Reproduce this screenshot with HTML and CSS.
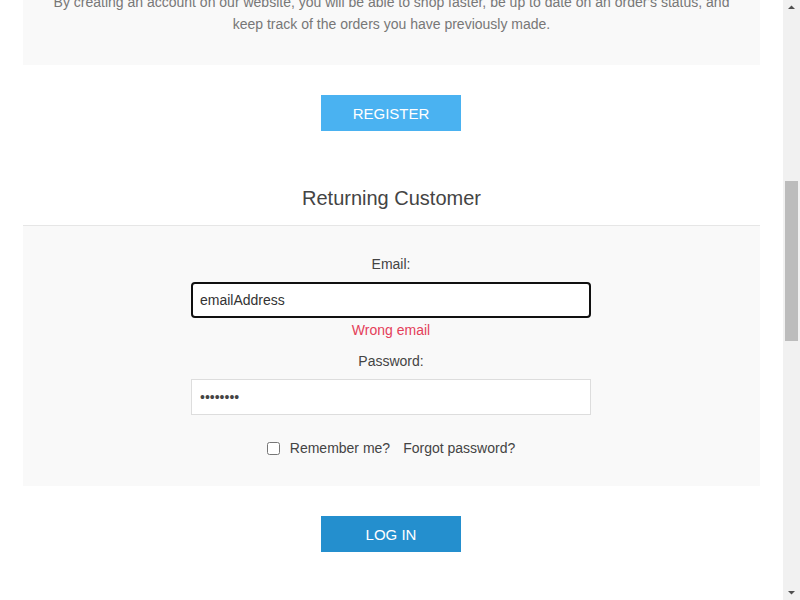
FILE: index.html
```html
<!DOCTYPE html>
<html lang="en">
<head>
<meta charset="utf-8">
<title>Login</title>
<link rel="stylesheet" href="styles.css">
</head>
<body>
<header class="site-header">
  <div class="topbar">
    <span class="topbar-link">Register</span>
    <span class="topbar-link">Log in</span>
    <span class="topbar-link">Wishlist (0)</span>
    <span class="topbar-link">Shopping cart (0)</span>
  </div>
  <div class="brand-row">
    <span class="brand">Your store name</span>
  </div>
  <nav class="menu">
    <span class="menu-item">Computers</span>
    <span class="menu-item">Electronics</span>
    <span class="menu-item">Apparel</span>
    <span class="menu-item">Books</span>
  </nav>
</header>

<main class="page">
  <h1 class="page-title">Welcome, Please Sign In!</h1>

  <section class="block">
    <h2 class="block-title">New Customer</h2>
    <div class="panel panel--text">
      <p class="intro">By creating an account on our website, you will be able to shop faster, be up to date on an order's status, and keep track of the orders you have previously made.</p>
    </div>
    <div class="actions">
      <button type="button" class="btn btn--register">Register</button>
    </div>
  </section>

  <section class="block">
    <h2 class="block-title js-anchor">Returning Customer</h2>
    <form class="panel panel--form">
      <label class="label" for="email">Email:</label>
      <input id="email" class="field field--active" type="text" value="emailAddress">
      <span class="error">Wrong email</span>
      <label class="label label--gap" for="password">Password:</label>
      <input id="password" class="field" type="password" value="12345678">
      <div class="remember">
        <input id="remember" class="check" type="checkbox">
        <label class="remember-label" for="remember">Remember me?</label>
        <a class="forgot" href="#">Forgot password?</a>
      </div>
    </form>
    <div class="actions actions--last">
      <button type="button" class="btn btn--login">Log in</button>
    </div>
  </section>
</main>

<footer class="site-footer">
  <div class="footer-inner">
    <span class="footer-text">Powered by your store</span>
  </div>
</footer>

<div class="scrollbar" aria-hidden="true">
  <svg class="sb-arrow" width="17" height="17" viewBox="0 0 17 17"><polygon points="5,9 8.5,5.5 12,9" fill="#505050"/></svg>
  <div class="sb-track"><div class="sb-thumb"></div></div>
  <svg class="sb-arrow" width="17" height="17" viewBox="0 0 17 17"><polygon points="5,8 8.5,11.5 12,8" fill="#505050"/></svg>
</div>
<script src="script.js"></script>
</body>
</html>
```

FILE: styles.css
```css
* { box-sizing: border-box; }

html, body {
  margin: 0;
  padding: 0;
}

body {
  font-family: "Liberation Sans", Arial, sans-serif;
  font-size: 14px;
  color: #444;
  background: #fff;
  padding-right: 17px;
}

/* header (above the visible area) */
.site-header {
  height: 300px;
  display: flex;
  flex-direction: column;
}
.topbar {
  height: 40px;
  display: flex;
  justify-content: flex-end;
  align-items: center;
  gap: 20px;
  padding: 0 23px;
  background: #eee;
  color: #777;
  font-size: 12px;
}
.brand-row {
  flex: 1;
  display: flex;
  align-items: center;
  padding: 0 23px;
}
.brand {
  font-size: 28px;
  color: #4ab2f1;
}
.menu {
  height: 60px;
  display: flex;
  align-items: center;
  justify-content: center;
  gap: 30px;
  border-top: 1px solid #ddd;
  border-bottom: 1px solid #ddd;
  color: #555;
  text-transform: uppercase;
}

.page {
  width: 737px;
  margin: 0 auto;
}

.page-title {
  margin: 0;
  padding: 70px 0 71px;
  font-size: 30px;
  line-height: 40px;
  font-weight: normal;
  text-align: center;
  color: #444;
}

.block-title {
  margin: 55px 0 0;
  padding: 0 0 15px;
  font-size: 20px;
  line-height: 24px;
  font-weight: normal;
  text-align: center;
  color: #444;
  border-bottom: 1px solid #e6e6e6;
}
.page-title + .block .block-title { margin-top: 0; }

.panel {
  background: #f9f9f9;
}

.panel--text {
  padding: 30px 15px;
}
.intro {
  margin: 0;
  text-align: center;
  line-height: 22px;
  color: #777;
}

.actions {
  display: flex;
  justify-content: center;
  padding: 30px 1px 0 0;
}
.actions--last { padding-bottom: 60px; }

.btn {
  width: 140px;
  height: 36px;
  border: none;
  padding: 0;
  font-family: "Liberation Sans", Arial, sans-serif;
  font-size: 15px;
  text-transform: uppercase;
  color: #fff;
  cursor: pointer;
}
.btn--register { background: #4ab2f1; }
.btn--login { background: #248fce; }

.panel--form {
  padding: 28px 1px 28px 0;
  display: flex;
  flex-direction: column;
  align-items: center;
}

.label {
  line-height: 20px;
  color: #444;
  margin-bottom: 8px;
}
.label--gap { margin-top: 11px; }

.field {
  width: 400px;
  height: 36px;
  border: 1px solid #ddd;
  background: #fff;
  padding: 0 8px;
  font-family: "Liberation Sans", Arial, sans-serif;
  font-size: 14px;
  color: #444;
  border-radius: 0;
}
.field:focus { outline: none; }
.field--active {
  border: 2px solid #101010;
  border-radius: 4px;
  padding: 0 7px;
  color: #333;
}

.error {
  margin-top: 2px;
  line-height: 20px;
  color: #e4405a;
}

.remember {
  margin-top: 23px;
  display: flex;
  align-items: center;
  line-height: 20px;
}
.check {
  width: 13px;
  height: 13px;
  margin: 0 10px 0 0;
}
.remember-label { color: #444; }
.forgot {
  margin-left: 13px;
  color: #444;
  text-decoration: none;
}

.site-footer {
  min-height: 895px;
  background: #f3f3f3;
}
.footer-inner {
  padding: 40px 23px;
  text-align: center;
  color: #888;
  font-size: 12px;
}

/* window scrollbar, drawn over the right edge of the viewport */
.scrollbar {
  position: fixed;
  top: 0;
  right: 0;
  width: 17px;
  height: 100vh;
  background: #f1f1f1;
  display: flex;
  flex-direction: column;
}
.sb-arrow {
  display: block;
  flex: none;
}
.sb-track {
  flex: 1;
  padding: 164px 2px 0;
}
.sb-thumb {
  height: 160px;
  background: #bcbcbc;
}
```

FILE: script.js
```js
(function () {
  function place() {
    var email = document.getElementById('email');
    if (email) {
      try { email.focus({ preventScroll: true }); } catch (e) { email.focus(); }
      var n = email.value.length;
      email.setSelectionRange(n, n);
    }
    var anchor = document.querySelector('.js-anchor');
    if (anchor) {
      var y = anchor.getBoundingClientRect().top + window.scrollY - 186;
      window.scrollTo(0, y);
    }
  }
  place();
  window.addEventListener('load', place);
})();
```
